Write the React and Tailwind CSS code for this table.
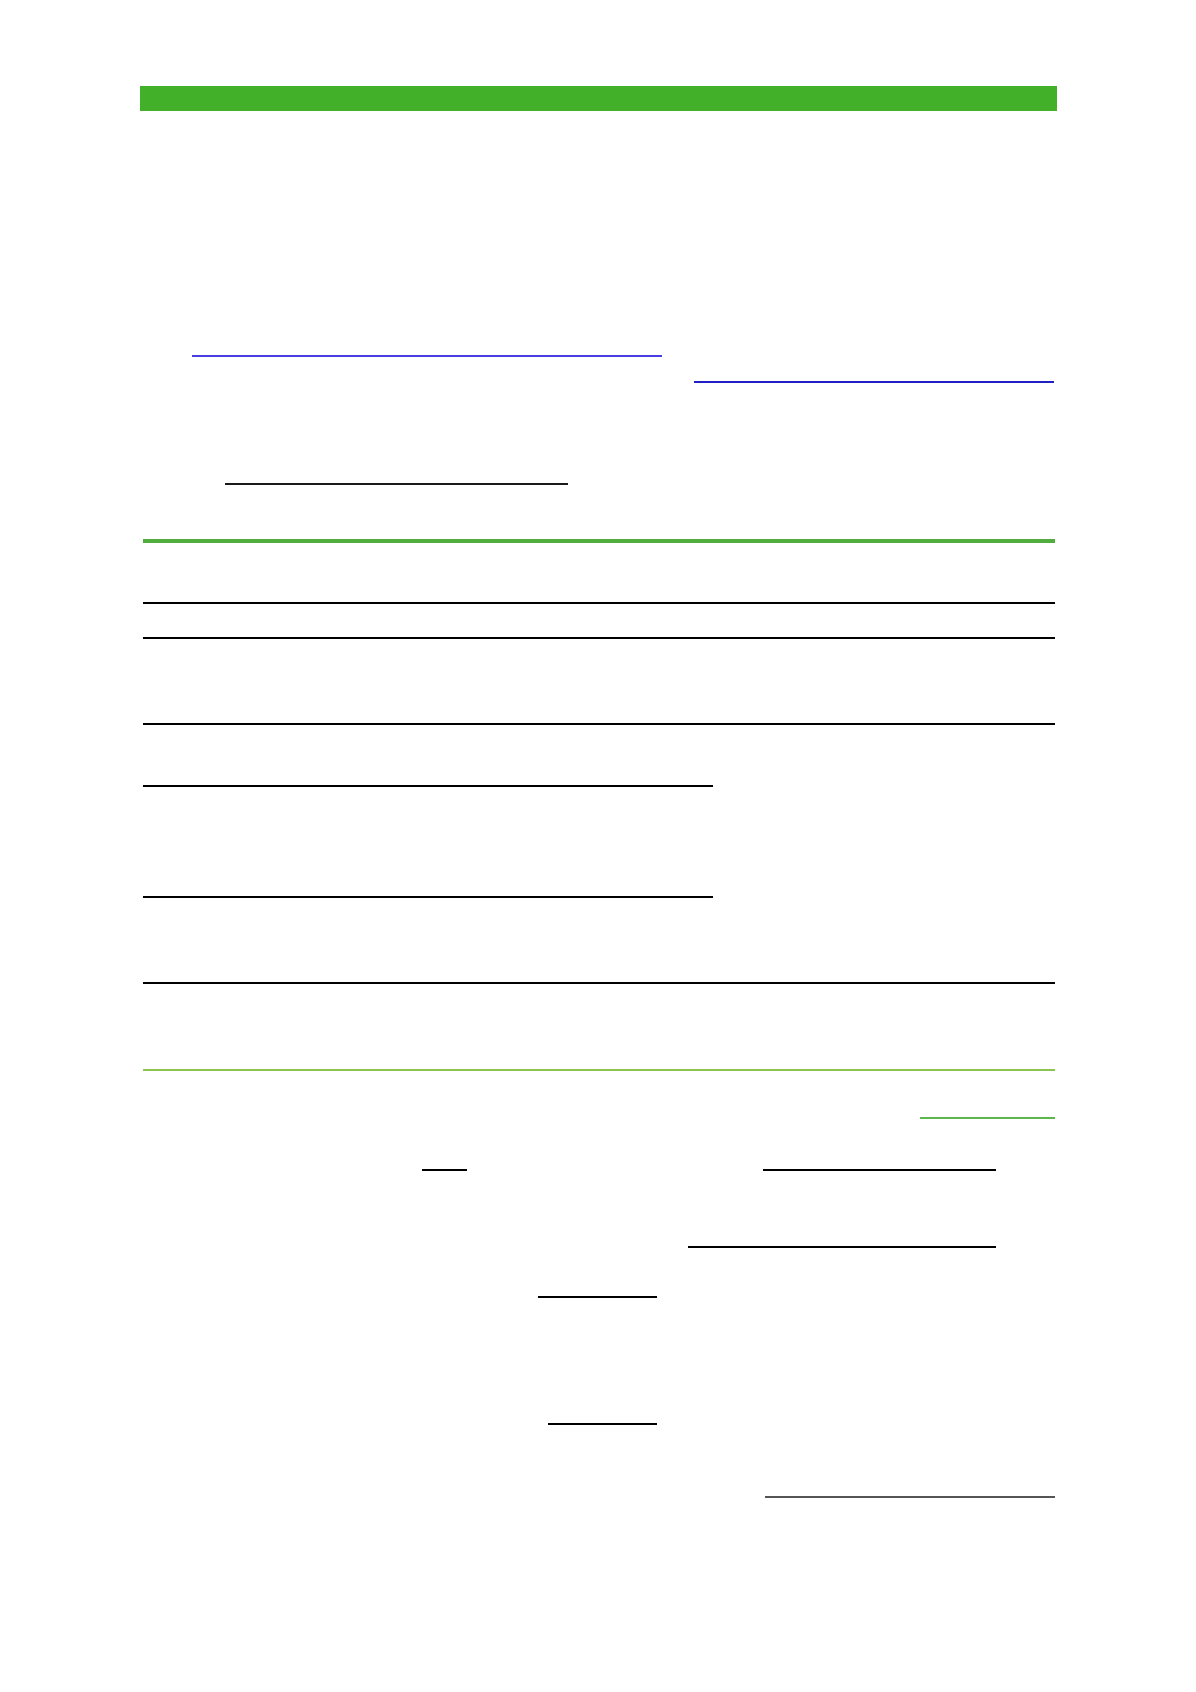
const Rule = ({ className }) => <div className={className} />;

const App = () => {
  return (
    <div className="min-h-[1692px] w-full bg-white font-['Liberation_Sans',sans-serif]">
      <div className="mx-auto w-[1196px] px-[140px] pt-[86px]">
        {/* header band */}
        <div className="h-[25px] w-[917px] bg-[#43b02a]" />

        {/* intro links */}
        <Rule className="mt-[244px] ml-[52px] h-[2px] w-[470px] bg-[#4a3fe0]" />
        <Rule className="mt-[24px] ml-[554px] h-[1.5px] w-[360px] bg-[#1f1fc4]" />
        <Rule className="mt-[100.5px] ml-[85px] h-[2px] w-[343px] bg-[#1a1a1a]" />

        {/* table */}
        <div className="mt-[54px] ml-[3px] w-[912px] border-t-4 border-[#50ad3e]">
          <div className="grid h-[61px] grid-cols-[570px_202px_140px] border-b-2 border-black">
            <div />
            <div />
            <div />
          </div>
          <div className="grid h-[35px] grid-cols-[570px_202px_140px] border-b-2 border-black">
            <div />
            <div />
            <div />
          </div>
          <div className="grid h-[86px] grid-cols-[570px_202px_140px] border-b-2 border-black">
            <div />
            <div />
            <div />
          </div>
          <div className="flex h-[259px] border-b-2 border-black">
            <div className="flex w-[570px] flex-col">
              <div className="h-[62px] border-b-2 border-black" />
              <div className="h-[111px] border-b-2 border-black" />
              <div className="flex-1" />
            </div>
            <div className="w-[202px]" />
            <div className="flex-1" />
          </div>
          <div className="h-[87px] border-b-2 border-[#8dc34f]" />
        </div>

        {/* signature / footer fields */}
        <Rule className="mt-[46px] ml-[780px] h-[2px] w-[135px] bg-[#5cb84c]" />
        <div className="mt-[50px] flex">
          <Rule className="ml-[282px] h-[2px] w-[45px] bg-black" />
          <Rule className="ml-[296px] h-[2px] w-[233px] bg-black" />
        </div>
        <Rule className="mt-[75px] ml-[548px] h-[2px] w-[308px] bg-black" />
        <Rule className="mt-[48px] ml-[398px] h-[2px] w-[119px] bg-black" />
        <Rule className="mt-[125px] ml-[408px] h-[2px] w-[109px] bg-black" />
        <Rule className="mt-[71px] ml-[625px] h-[2px] w-[290px] bg-[#555]" />
      </div>
    </div>
  );
};

export default App;
